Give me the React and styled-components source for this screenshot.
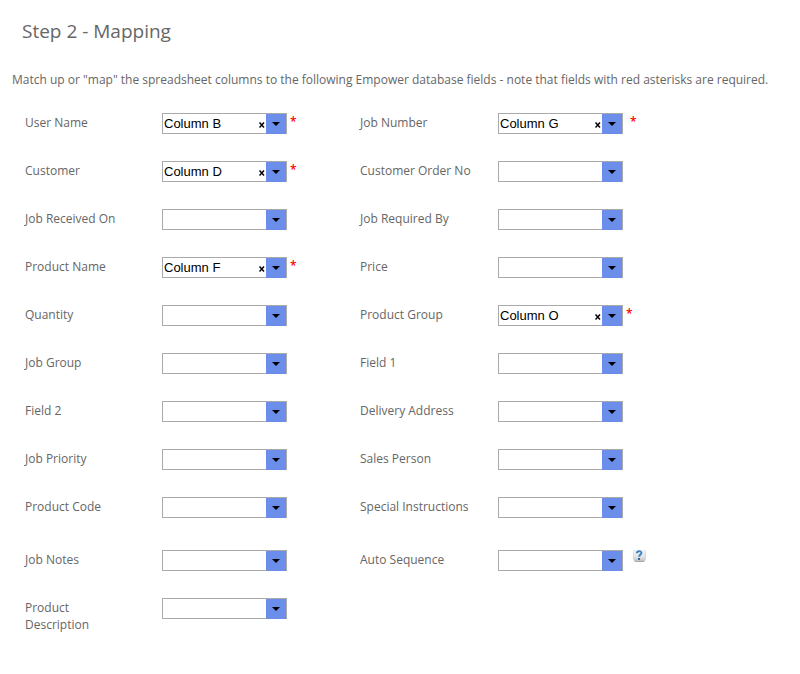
import React, { useState } from "react";
import styled, { createGlobalStyle } from "styled-components";

const GlobalStyle = createGlobalStyle`
  body {
    margin: 0;
    background-color: #fff;
    color: #666;
    font-family: "Open Sans", "Noto Sans", sans-serif;
    font-size: 12px;
    line-height: 17px;
  }
`;

const Page = styled.main`
  padding: 19px 12px;
`;

const Title = styled.h1`
  margin: 0 10px 28px;
  font-size: 19px;
  font-weight: 400;
  line-height: 24px;
`;

const Intro = styled.p`
  margin: 0 0 25px;
`;

const Form = styled.form`
  padding-left: 13px;
`;

const Row = styled.div`
  display: grid;
  grid-template-columns: 335px 1fr;
  align-items: start;
  min-height: ${(props) => (props.$tall ? "53px" : "48px")};
`;

const Field = styled.div`
  display: grid;
  grid-template-columns: ${(props) => (props.$wide ? "138px" : "137px")} 125px auto;
  justify-content: start;
  align-items: start;
`;

const Label = styled.label`
  padding-top: 1px;
  padding-right: ${(props) => (props.$wide ? "16px" : "32px")};
`;

const Combo = styled.div`
  box-sizing: border-box;
  display: grid;
  grid-template-columns: 1fr 12px 20px;
  grid-template-rows: 19px;
  height: 21px;
  border: 1px solid #a9a9a9;

  > select {
    grid-area: 1 / 1 / 2 / 4;
    appearance: none;
    width: 100%;
    min-width: 0;
    margin: 0;
    padding: 0 32px 0 1px;
    border: none;
    border-radius: 0;
    background: none;
    color: #000;
    font-family: "Liberation Sans", Arial, sans-serif;
    font-size: 13px;
    line-height: 19px;
  }
`;

const ClearButton = styled.button`
  grid-area: 1 / 2 / 2 / 3;
  z-index: 1;
  display: flex;
  align-items: center;
  justify-content: center;
  margin: 0;
  padding: 2px 0 0 4px;
  border: none;
  background: none;
  cursor: pointer;
`;

/* one pixel taller than the row, so it covers the bottom border */
const Arrow = styled.span`
  grid-area: 1 / 3 / 2 / 4;
  z-index: 1;
  display: flex;
  align-items: center;
  justify-content: center;
  height: 20px;
  background-color: #6b8eeb;
  pointer-events: none;
`;

const Required = styled.span`
  padding-left: ${(props) => (props.$spaced ? "7px" : "3px")};
  color: #f00;
  font-weight: 600;
`;

const HelpButton = styled.button`
  display: flex;
  margin: 0;
  padding: 0 0 0 7px;
  border: none;
  background: none;
  cursor: help;
`;

const COLUMNS = "ABCDEFGHIJKLMNOPQRSTUVWXYZ"
  .split("")
  .map((letter) => `Column ${letter}`);

const ROWS = [
  [
    { name: "User Name", value: "Column B", required: true },
    { name: "Job Number", value: "Column G", required: true, spaced: true },
  ],
  [
    { name: "Customer", value: "Column D", required: true },
    { name: "Customer Order No" },
  ],
  [{ name: "Job Received On" }, { name: "Job Required By" }],
  [
    { name: "Product Name", value: "Column F", required: true },
    { name: "Price" },
  ],
  [
    { name: "Quantity" },
    { name: "Product Group", value: "Column O", required: true },
  ],
  [{ name: "Job Group" }, { name: "Field 1" }],
  [{ name: "Field 2" }, { name: "Delivery Address" }],
  [{ name: "Job Priority" }, { name: "Sales Person" }],
  [{ name: "Product Code" }, { name: "Special Instructions" }],
  [{ name: "Job Notes" }, { name: "Auto Sequence", help: true }],
  [{ name: "Product Description" }],
];

function HelpIcon() {
  return (
    <svg width="18" height="14" viewBox="0 0 18 14" aria-hidden="true">
      <defs>
        <linearGradient id="helpFace" x1="0" y1="0" x2="0" y2="1">
          <stop offset="0" stopColor="#fafafa" />
          <stop offset="0.6" stopColor="#e4e4e4" />
          <stop offset="1" stopColor="#bdbdbd" />
        </linearGradient>
      </defs>
      <rect
        x="3.5"
        y="-0.5"
        width="12"
        height="12"
        rx="2.5"
        fill="url(#helpFace)"
        stroke="#d0d0d0"
        strokeOpacity="0.7"
      />
      <path d="M5 11.5h9" stroke="#aaa" fill="none" />
      <path
        d="M6.8 3.2C6.9 0.6 11.4 0.4 11.4 2.9C11.4 4.7 9.2 4.5 9.2 6.8"
        stroke="#3a86c8"
        strokeWidth="2"
        fill="none"
      />
      <rect x="8" y="8" width="2" height="2" fill="#2c6cab" />
    </svg>
  );
}

function MappingField({ field, wide }) {
  const [value, setValue] = useState(field.value || "");
  const id = field.name.toLowerCase().replace(/ /g, "-");

  return (
    <Field $wide={wide}>
      <Label htmlFor={id} $wide={wide}>
        {field.name}
      </Label>
      <Combo>
        <select
          id={id}
          value={value}
          required={field.required}
          onChange={(e) => setValue(e.target.value)}
        >
          <option value=""></option>
          {COLUMNS.map((column) => (
            <option key={column}>{column}</option>
          ))}
        </select>
        {value !== "" && (
          <ClearButton
            type="button"
            aria-label={`Clear ${field.name}`}
            onClick={() => setValue("")}
          >
            <svg width="6" height="6" viewBox="0 0 6 6">
              <path
                d="M0.5 0.5L5 5.5M5 0.5L0.5 5.5"
                stroke="#000"
                strokeWidth="1.5"
              />
            </svg>
          </ClearButton>
        )}
        <Arrow>
          <svg width="8" height="4" viewBox="0 0 8 4">
            <path d="M0 0H8L4 4Z" fill="#000" />
          </svg>
        </Arrow>
      </Combo>
      {field.required && <Required $spaced={field.spaced}>*</Required>}
      {field.help && (
        <HelpButton type="button" aria-label={`Help for ${field.name}`}>
          <HelpIcon />
        </HelpButton>
      )}
    </Field>
  );
}

export default function App() {
  return (
    <Page>
      <GlobalStyle />
      <Title>Step 2 - Mapping</Title>
      <Intro>
        Match up or "map" the spreadsheet columns to the following Empower
        database fields - note that fields with red asterisks are required.
      </Intro>
      <Form>
        {ROWS.map(([left, right]) => (
          <Row key={left.name} $tall={left.name === "Product Code"}>
            <MappingField field={left} />
            {right && <MappingField field={right} wide />}
          </Row>
        ))}
      </Form>
    </Page>
  );
}
